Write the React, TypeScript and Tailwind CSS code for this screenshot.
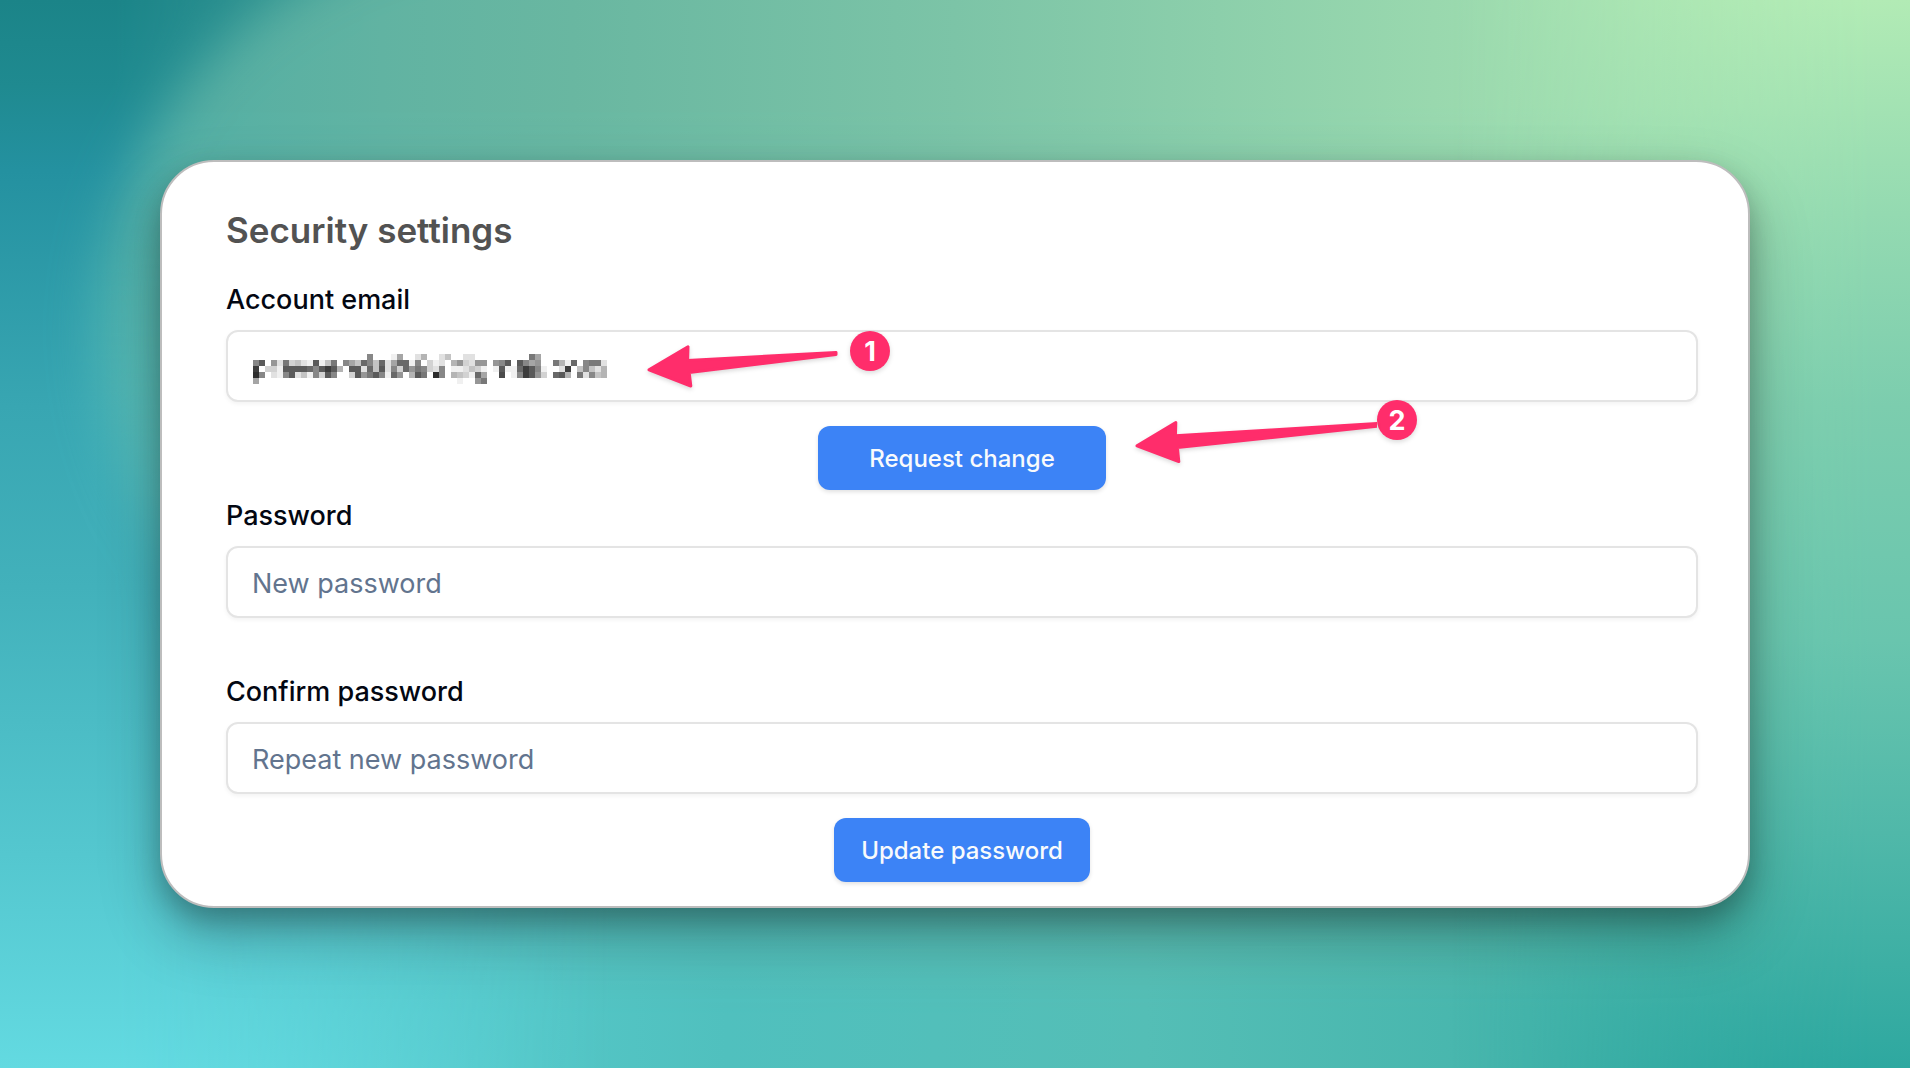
import type { InputHTMLAttributes, ReactNode } from 'react';

// Censored e-mail address, one hex digit of darkness per 6px block
const mosaicRows = [
  '00000000000000000008000160025002400220000000009600000000000',
  '8b07293421b1490864a84a26aa1803120573277078b0b86700951a08992',
  'd0331bbbba8bdb50bb2a4b283a798328011243101b11adb81002d048425',
  'e80218b24183b8003b79b81a705b90e805431a600c018db730ab5092845',
  '60000000000000000000000000000000001007900000000000000000000',
];

function Mosaic() {
  return (
    <svg
      width="354"
      height="30"
      viewBox="0 0 59 5"
      shapeRendering="crispEdges"
      aria-hidden="true"
      className="pointer-events-none absolute left-[27px] top-6"
    >
      {mosaicRows.map((row, y) =>
        row.split('').map((level, x) => (
          <rect
            key={`${x}-${y}`}
            x={x}
            y={y}
            width="1"
            height="1"
            fill="#000"
            fillOpacity={parseInt(level, 16) / 17}
          />
        ))
      )}
    </svg>
  );
}

function Backdrop() {
  return (
    <svg
      className="absolute inset-0 h-full w-full"
      viewBox="0 0 1910 1068"
      preserveAspectRatio="none"
      aria-hidden="true"
    >
      <defs>
        <linearGradient id="bottom">
          <stop offset="0" stopColor="#62d9e0" />
          <stop offset="0.25" stopColor="#55c8c9" />
          <stop offset="0.38" stopColor="#50c0be" />
          <stop offset="0.6" stopColor="#54beb6" />
          <stop offset="0.8" stopColor="#46b5ac" />
          <stop offset="1" stopColor="#2ea8a0" />
        </linearGradient>
        <linearGradient id="top">
          <stop offset="0" stopColor="#4aaaa4" />
          <stop offset="0.2" stopColor="#61b3a2" />
          <stop offset="0.3" stopColor="#69b7a1" />
          <stop offset="0.5" stopColor="#7cc4a7" />
          <stop offset="0.75" stopColor="#99d8ae" />
          <stop offset="1" stopColor="#b2ebb5" />
        </linearGradient>
        <linearGradient id="left" x2="0" y2="1">
          <stop offset="0" stopColor="#1b8488" />
          <stop offset="0.08" stopColor="#1f8a90" />
          <stop offset="0.16" stopColor="#2491a0" />
          <stop offset="0.38" stopColor="#38a6b2" />
          <stop offset="0.55" stopColor="#42b1bb" />
          <stop offset="0.8" stopColor="#54c7cf" />
          <stop offset="1" stopColor="#63dae1" />
        </linearGradient>
        <linearGradient id="right" x2="0" y2="1">
          <stop offset="0" stopColor="#b2ebb5" />
          <stop offset="0.2" stopColor="#94dab1" />
          <stop offset="0.38" stopColor="#7ccdae" />
          <stop offset="0.6" stopColor="#69c5ae" />
          <stop offset="0.78" stopColor="#50b8a9" />
          <stop offset="1" stopColor="#2ea8a0" />
        </linearGradient>
        <linearGradient id="fadeDown" x2="0" y2="1">
          <stop offset="0.1" stopColor="#fff" />
          <stop offset="0.95" stopColor="#000" />
        </linearGradient>
        <linearGradient id="fadeIn">
          <stop offset="0.76" stopColor="#000" />
          <stop offset="0.98" stopColor="#fff" />
        </linearGradient>
        <linearGradient id="fadeOut">
          <stop offset="0.06" stopColor="#fff" />
          <stop offset="0.32" stopColor="#000" />
        </linearGradient>
        <filter id="soft" x="-20%" y="-20%" width="140%" height="140%">
          <feGaussianBlur stdDeviation="26" />
        </filter>
        <mask id="topMask">
          <rect width="1910" height="1068" fill="url(#fadeDown)" />
        </mask>
        <mask id="rightMask">
          <rect width="1910" height="1068" fill="url(#fadeIn)" />
        </mask>
        <mask id="leftMask">
          <rect width="1910" height="1068" fill="url(#fadeOut)" />
          <ellipse cx="520" cy="330" rx="420" ry="400" fill="#000" filter="url(#soft)" />
        </mask>
      </defs>
      <rect width="1910" height="1068" fill="url(#bottom)" />
      <rect width="1910" height="1068" fill="url(#top)" mask="url(#topMask)" />
      <rect width="1910" height="1068" fill="url(#right)" mask="url(#rightMask)" />
      <rect width="1910" height="1068" fill="url(#left)" mask="url(#leftMask)" />
    </svg>
  );
}

interface FieldProps extends InputHTMLAttributes<HTMLInputElement> {
  id: string;
  label: string;
  children?: ReactNode;
}

function Field({ id, label, children, ...props }: FieldProps) {
  return (
    <div className="flex flex-col gap-4">
      <label htmlFor={id} className="text-[27px] leading-7 font-medium text-gray-950">
        {label}
      </label>
      <div className="relative">
        <input
          id={id}
          className="h-18 w-full rounded-xl border-2 border-[#e4e4e4] bg-white px-6 pt-0.5 text-[27px] text-gray-950 shadow-[0_2px_4px_rgba(0,0,0,0.05)] placeholder:text-slate-500"
          {...props}
        />
        {children}
      </div>
    </div>
  );
}

function Badge({ children }: { children: ReactNode }) {
  return (
    <span className="flex size-10 items-center justify-center rounded-full bg-[#ff2d6b] text-[27px] leading-none font-bold text-white shadow-[0_2px_5px_rgba(0,0,0,0.15)]">
      {children}
    </span>
  );
}

export default function App() {
  return (
    <main className="relative flex min-h-screen items-center p-40 font-['Inter',sans-serif]">
      <Backdrop />
      <section className="relative w-full rounded-[54px] border-2 border-[#bdbdbd] bg-white pt-12 pr-[50px] pb-6 pl-16 shadow-[0_28px_60px_rgba(0,0,0,0.26),0_12px_26px_rgba(0,0,0,0.22)]">
        <h1 className="text-[35px] leading-10 font-semibold text-[#525252]">Security settings</h1>

        <form className="mt-9" onSubmit={(e) => e.preventDefault()}>
          <Field id="email" label="Account email" type="email">
            <Mosaic />
            <div className="pointer-events-none absolute left-[421px] top-px flex items-start gap-[11px]">
              <svg
                width="192"
                height="44"
                viewBox="0 0 192 44"
                className="mt-3.5 drop-shadow-[0_2px_2px_rgba(0,0,0,0.15)]"
                aria-hidden="true"
              >
                <path
                  d="M2 24.8 41 1.8L40.6 15.4 189 7.4L189 9.4 42.2 27.6 43.8 41Z"
                  fill="#ff2d6b"
                  stroke="#ff2d6b"
                  strokeWidth="3"
                  strokeLinejoin="round"
                />
              </svg>
              <Badge>1</Badge>
            </div>
          </Field>

          <div className="relative mt-6 flex justify-center">
            <button
              type="button"
              className="h-16 w-72 rounded-xl bg-[#3c83f6] pt-0.5 text-2xl font-medium text-slate-50 shadow-[0_2px_4px_rgba(0,0,0,0.12)]"
            >
              Request change
            </button>
            <div className="pointer-events-none absolute -top-[26px] left-1/2 ml-[173px] flex items-start">
              <svg
                width="242"
                height="44"
                viewBox="0 0 242 44"
                className="mt-5 drop-shadow-[0_2px_2px_rgba(0,0,0,0.15)]"
                aria-hidden="true"
              >
                <path
                  d="M2 25.8 40.8 2.6L40.4 15.8 242 3.4L242 6.2 42.4 27.6 43.8 41.6Z"
                  fill="#ff2d6b"
                  stroke="#ff2d6b"
                  strokeWidth="3"
                  strokeLinejoin="round"
                />
              </svg>
              <Badge>2</Badge>
            </div>
          </div>

          <div className="mt-3 flex flex-col gap-[60px]">
            <Field id="password" label="Password" type="password" placeholder="New password" />
            <Field id="confirm" label="Confirm password" type="password" placeholder="Repeat new password" />
          </div>

          <div className="mt-6 flex justify-center">
            <button
              type="submit"
              className="h-16 w-64 rounded-xl bg-[#3c83f6] pt-0.5 text-2xl font-medium text-slate-50 shadow-[0_2px_4px_rgba(0,0,0,0.12)]"
            >
              Update password
            </button>
          </div>
        </form>
      </section>
    </main>
  );
}
